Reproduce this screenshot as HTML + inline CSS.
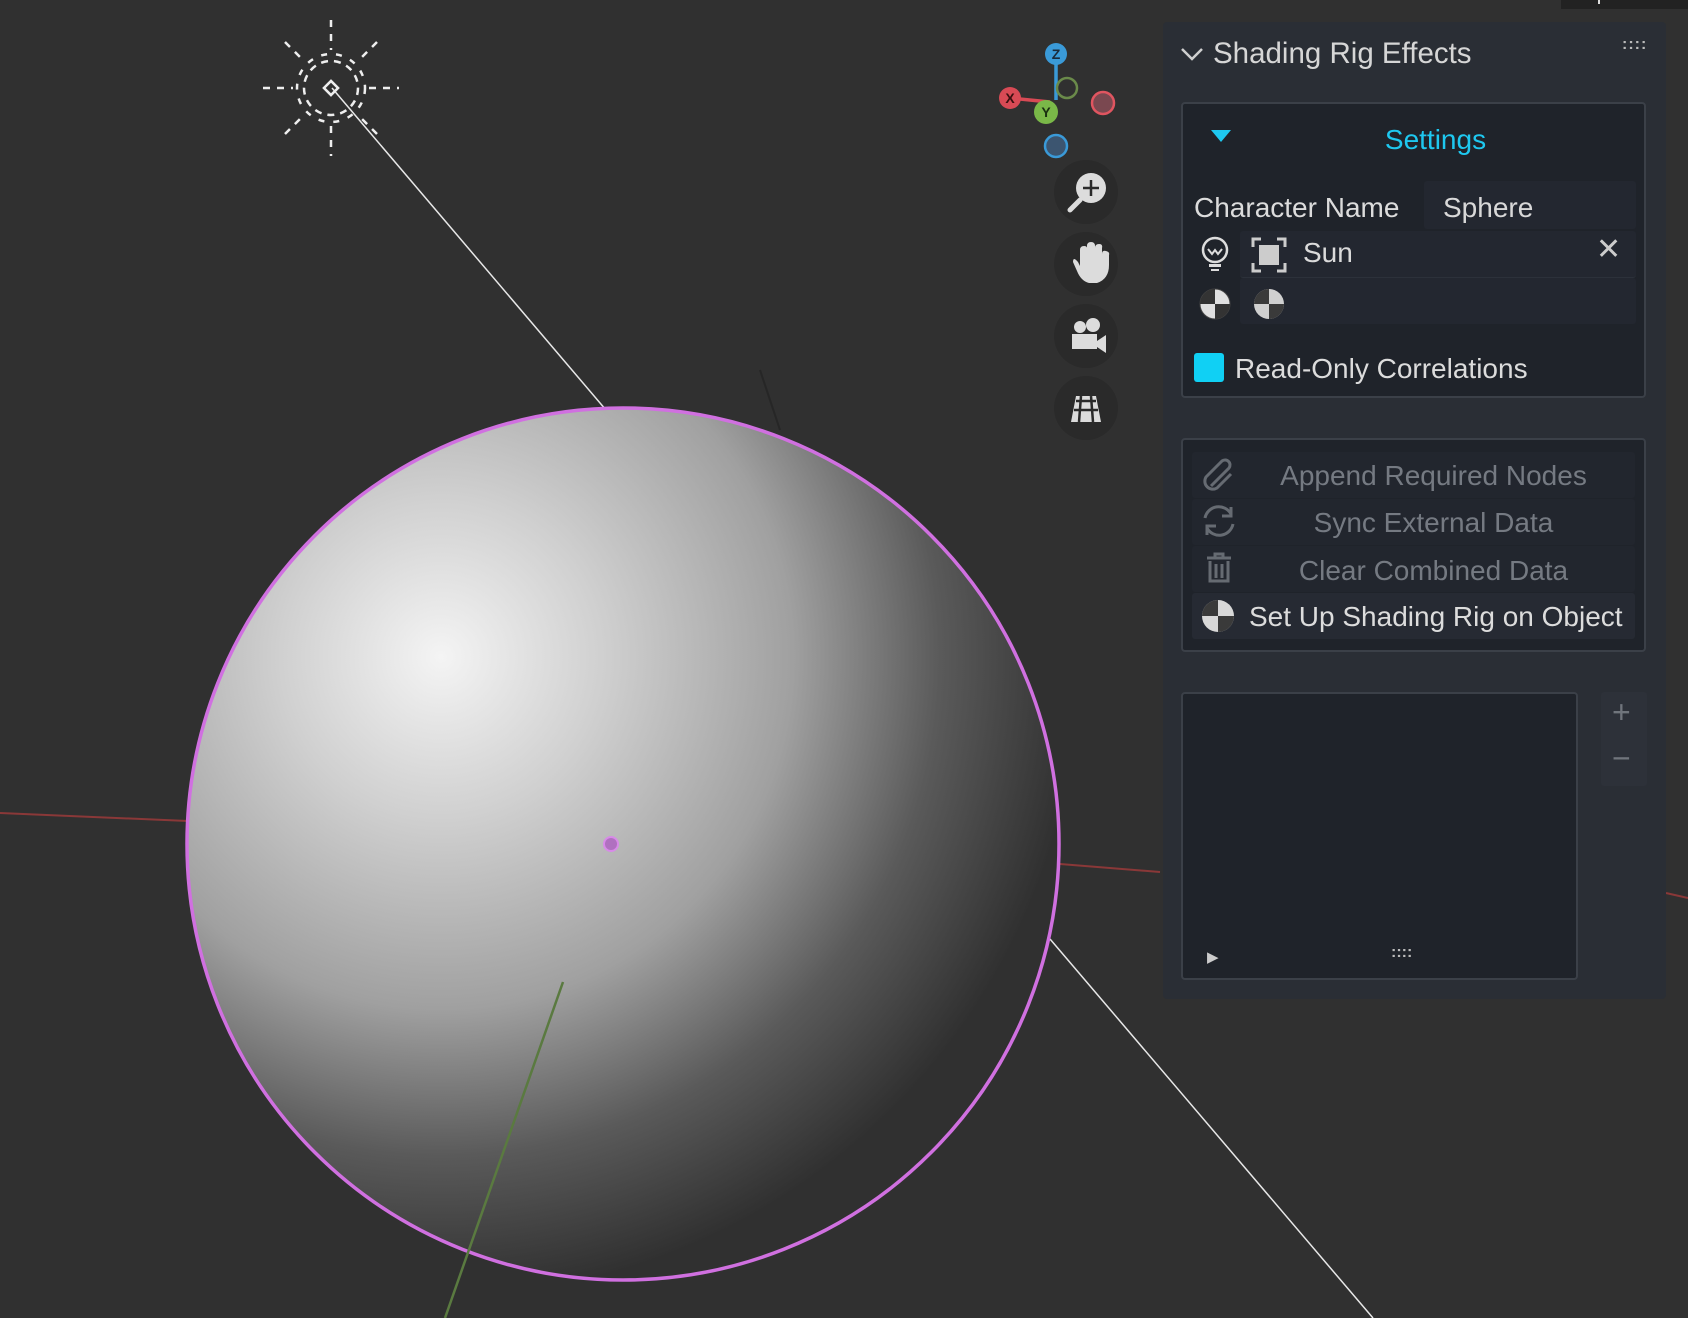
<!DOCTYPE html>
<html><head><meta charset="utf-8"><style>
*{margin:0;padding:0;box-sizing:border-box}
body{width:1688px;height:1318px;overflow:hidden;background:#303030;font-family:"Liberation Sans",sans-serif;position:relative}
svg.bg{position:absolute;left:0;top:0}
.abs{position:absolute}
.panel{left:1163px;top:22px;width:503px;height:977px;background:#2a2e35;border-radius:4px}
.box{position:absolute;background:#1f232a;border:2px solid #3b4048;border-radius:4px}
.t{position:absolute;white-space:nowrap}
.fld{position:absolute;background:#232730;border-radius:3px}
.dis{color:#757a82}
</style></head><body>
<svg class="bg" width="1688" height="1318" viewBox="0 0 1688 1318">
<defs>
<radialGradient id="sg" cx="441" cy="657" r="640" gradientUnits="userSpaceOnUse">
<stop offset="0" stop-color="#f4f4f4"/>
<stop offset="0.25" stop-color="#d0d0d0"/>
<stop offset="0.55" stop-color="#a0a0a0"/>
<stop offset="0.78" stop-color="#5a5a5a"/>
<stop offset="1" stop-color="#303030"/>
</radialGradient>
</defs>
<line x1="0" y1="813" x2="188" y2="821" stroke="#8a3838" stroke-width="2"/>
<line x1="1060" y1="864" x2="1160" y2="872" stroke="#8a3838" stroke-width="2"/>
<line x1="1666" y1="893" x2="1688" y2="898" stroke="#8a3838" stroke-width="2"/>
<line x1="332" y1="88" x2="606" y2="410" stroke="#e8e8e8" stroke-width="1.5"/>
<line x1="1050" y1="939" x2="1373" y2="1318" stroke="#e8e8e8" stroke-width="1.5"/>
<line x1="760" y1="370" x2="780" y2="430" stroke="#262626" stroke-width="2"/>
<circle cx="623" cy="844" r="436" fill="url(#sg)" stroke="#d070e0" stroke-width="3.5"/>
<line x1="563" y1="982" x2="445" y2="1318" stroke="#5a7a40" stroke-width="2.5"/>
<circle cx="611" cy="844" r="7" fill="#b070c0" stroke="#d88ae8" stroke-width="2"/>
<g stroke="#eee" stroke-width="2.5" fill="none">
<circle cx="331" cy="88" r="27" stroke-dasharray="7 6"/>
<circle cx="331" cy="88" r="34" stroke-dasharray="6 9"/>
<rect x="326" y="83" width="10" height="10" transform="rotate(45 331 88)"/>
<g stroke-dasharray="7 7">
<line x1="331" y1="20" x2="331" y2="50"/><line x1="331" y1="126" x2="331" y2="156"/>
<line x1="263" y1="88" x2="293" y2="88"/><line x1="369" y1="88" x2="399" y2="88"/>
<line x1="285" y1="42" x2="303" y2="60"/><line x1="377" y1="42" x2="359" y2="60"/>
<line x1="285" y1="134" x2="303" y2="116"/><line x1="377" y1="134" x2="359" y2="116"/>
</g></g>
<line x1="1056" y1="54" x2="1056" y2="100" stroke="#3a9ad8" stroke-width="3.5"/>
<line x1="1010" y1="98" x2="1050" y2="102" stroke="#d84a55" stroke-width="3.5"/>
<circle cx="1067" cy="88" r="10" fill="none" stroke="#6a8a4a" stroke-width="2.5"/>
<circle cx="1103" cy="103" r="11" fill="#7a4850" stroke="#e05560" stroke-width="2.5"/>
<circle cx="1056" cy="146" r="11" fill="#3c5570" stroke="#3a9ad8" stroke-width="2.5"/>
<circle cx="1056" cy="54" r="11" fill="#3a9ad8"/><text x="1056" y="59" font-size="14" font-weight="bold" text-anchor="middle" fill="#1a2a3a" font-family="Liberation Sans">Z</text>
<circle cx="1010" cy="98" r="11" fill="#d84a55"/><text x="1010" y="103" font-size="14" font-weight="bold" text-anchor="middle" fill="#3a1010" font-family="Liberation Sans">X</text>
<circle cx="1046" cy="112" r="12" fill="#7ab848"/><text x="1046" y="117" font-size="14" font-weight="bold" text-anchor="middle" fill="#1a3010" font-family="Liberation Sans">Y</text>
<g fill="#2a2a2a"><circle cx="1086" cy="192" r="32"/><circle cx="1086" cy="264" r="32"/><circle cx="1086" cy="336" r="32"/><circle cx="1086" cy="408" r="32"/></g>
<g fill="#dcdcdc" stroke="#dcdcdc">
<circle cx="1091" cy="188" r="15" stroke="none"/><line x1="1080" y1="200" x2="1070" y2="210" stroke-width="5" stroke-linecap="round"/>
<path d="M1091 180v16M1083 188h16" stroke="#2a2a2a" stroke-width="2.5"/>
<path d="M1073 262q0-6 5 0l2 4v-16q0-4 4-4t3 4v10v-14q0-4 4-4t4 4v14v-12q0-4 4-4t3 4v14v-8q0-4 4-3t3 4v10q0 14-12 18h-8q-8-2-12-12z" stroke="none"/>
<circle cx="1080" cy="327" r="6" stroke="none"/><circle cx="1093" cy="325" r="7" stroke="none"/>
<rect x="1072" y="334" width="25" height="15" stroke="none"/><path d="M1097 341l9-6v18l-9-6z" stroke="none"/>
<path d="M1071 422l5-26h20l5 26z" stroke="none"/>
</g>
<path d="M1076 401h20M1074 410h24M1081 396l-2 26M1091 396l2 26" stroke="#2a2a2a" stroke-width="2.5"/>
<rect x="1561" y="0" width="127" height="9" fill="#222"/>
<rect x="1598" y="0" width="2" height="4" fill="#ddd"/>
</svg>

<div class="abs panel">
<svg class="t" style="left:17px;top:24px" width="24" height="16" viewBox="0 0 24 16"><path d="M2 3l10 10 10-10" fill="none" stroke="#cfcfcf" stroke-width="2.5"/></svg>
<div class="t" style="left:50px;top:15px;color:#d6d6d6;font-size:29.5px">Shading Rig Effects</div>
<div class="t" style="left:459px;top:14px;color:#bbb;font-size:16px;letter-spacing:1px;font-weight:bold">::::</div>
</div>

<div class="box" style="left:1181px;top:102px;width:465px;height:296px">
<div class="t" style="left:28px;top:26px;width:0;height:0;border-left:10px solid transparent;border-right:10px solid transparent;border-top:12px solid #1ec8f0"></div>
<div class="t" style="left:0;width:461px;text-align:center;top:20px;color:#1ec8f0;font-size:28px;padding-left:44px">Settings</div>
<div class="t" style="left:11px;top:88px;color:#dcdcdc;font-size:28px">Character Name</div>
<div class="fld" style="left:241px;top:77px;width:212px;height:48px"></div>
<div class="t" style="left:260px;top:88px;color:#d8d8d8;font-size:28px">Sphere</div>
<div class="fld" style="left:57px;top:127px;width:396px;height:47px;border-bottom:1px solid #2c313a"></div>
<div class="fld" style="left:57px;top:174px;width:396px;height:46px"></div>
<svg class="t" style="left:14px;top:131px" width="36" height="40" viewBox="0 0 36 40"><circle cx="18" cy="15" r="12" fill="none" stroke="#ddd" stroke-width="2.5"/><path d="M11 14l4 5 3-4 3 4 4-5" fill="none" stroke="#ddd" stroke-width="2"/><rect x="12" y="29" width="12" height="3" fill="#ddd"/><rect x="14" y="34" width="8" height="2" fill="#ddd"/></svg>
<svg class="t" style="left:68px;top:133px" width="36" height="36" viewBox="0 0 36 36"><path d="M2 10V2h8M26 2h8v8M34 26v8h-8M10 34H2v-8" fill="none" stroke="#ccc" stroke-width="3"/><rect x="8" y="8" width="20" height="20" fill="#ccc"/></svg>
<div class="t" style="left:120px;top:133px;color:#dadada;font-size:28px">Sun</div>
<div class="t" style="left:413px;top:128px;color:#ccc;font-size:30px">&#x2715;</div>
<svg class="t" style="left:14px;top:182px" width="36" height="36" viewBox="0 0 36 36"><circle cx="18" cy="18" r="15" fill="#e0e0e0" stroke="#444" stroke-width="1"/><path d="M18 3a15 15 0 0 0-15 15h15zM18 18v15a15 15 0 0 0 15-15z" fill="#333"/></svg>
<svg class="t" style="left:68px;top:182px" width="36" height="36" viewBox="0 0 36 36"><circle cx="18" cy="18" r="15" fill="#d0d0d0"/><path d="M18 3a15 15 0 0 0-15 15h15zM18 18v15a15 15 0 0 0 15-15z" fill="#3a3a3a"/></svg>
<div class="t" style="left:11px;top:249px;width:30px;height:29px;background:#10d0f4;border-radius:3px"></div>
<div class="t" style="left:52px;top:249px;color:#dcdcdc;font-size:28px">Read-Only Correlations</div>
</div>

<div class="box" style="left:1181px;top:438px;width:465px;height:214px">
<div class="fld" style="left:9px;top:12px;width:443px;height:46px;background:#22262e"></div>
<div class="fld" style="left:9px;top:59px;width:443px;height:46px;background:#22262e"></div>
<div class="fld" style="left:9px;top:106px;width:443px;height:46px;background:#22262e"></div>
<div class="fld" style="left:9px;top:153px;width:443px;height:46px;background:#262a33"></div>
<div class="t dis" style="left:0;width:461px;text-align:center;top:20px;font-size:28px;padding-left:40px">Append Required Nodes</div>
<div class="t dis" style="left:0;width:461px;text-align:center;top:67px;font-size:28px;padding-left:40px">Sync External Data</div>
<div class="t dis" style="left:0;width:461px;text-align:center;top:115px;font-size:28px;padding-left:40px">Clear Combined Data</div>
<div class="t" style="left:66px;top:161px;color:#dcdcdc;font-size:28px">Set Up Shading Rig on Object</div>
<svg class="t" style="left:18px;top:16px" width="36" height="36" viewBox="0 0 36 36"><path d="M10 30L28 12a5 5 0 0 0-7-7L5 21a8 8 0 0 0 11 11l14-14" fill="none" stroke="#666b72" stroke-width="3"/></svg>
<svg class="t" style="left:18px;top:63px" width="36" height="36" viewBox="0 0 36 36"><path d="M4 15a14 14 0 0 1 26-4M32 21a14 14 0 0 1-26 4" fill="none" stroke="#666b72" stroke-width="3"/><path d="M30 4v9h-9M6 32v-9h9" fill="none" stroke="#666b72" stroke-width="3"/></svg>
<svg class="t" style="left:18px;top:110px" width="36" height="36" viewBox="0 0 36 36"><path d="M6 8h24M14 8V4h8v4M9 11v20h18V11M15 14v14M21 14v14" fill="none" stroke="#666b72" stroke-width="3"/></svg>
<svg class="t" style="left:17px;top:158px" width="36" height="36" viewBox="0 0 36 36"><circle cx="18" cy="18" r="16" fill="#d8d8d8"/><path d="M18 2a16 16 0 0 0-16 16h16zM18 18v16a16 16 0 0 0 16-16z" fill="#3a3a3a"/></svg>
</div>

<div class="box" style="left:1181px;top:692px;width:397px;height:288px">
<div class="t" style="left:24px;top:254px;color:#ccc;font-size:15px">&#9654;</div>
<div class="t" style="left:208px;top:250px;color:#bbb;font-size:16px;font-weight:bold">::::</div>
</div>
<div class="abs" style="left:1601px;top:692px;width:46px;height:94px;background:#2d3139;border-radius:3px"></div>
<div class="t" style="left:1612px;top:694px;color:#70757c;font-size:32px">+</div>
<div class="t" style="left:1612px;top:740px;color:#70757c;font-size:32px">&#8722;</div>
</body></html>
